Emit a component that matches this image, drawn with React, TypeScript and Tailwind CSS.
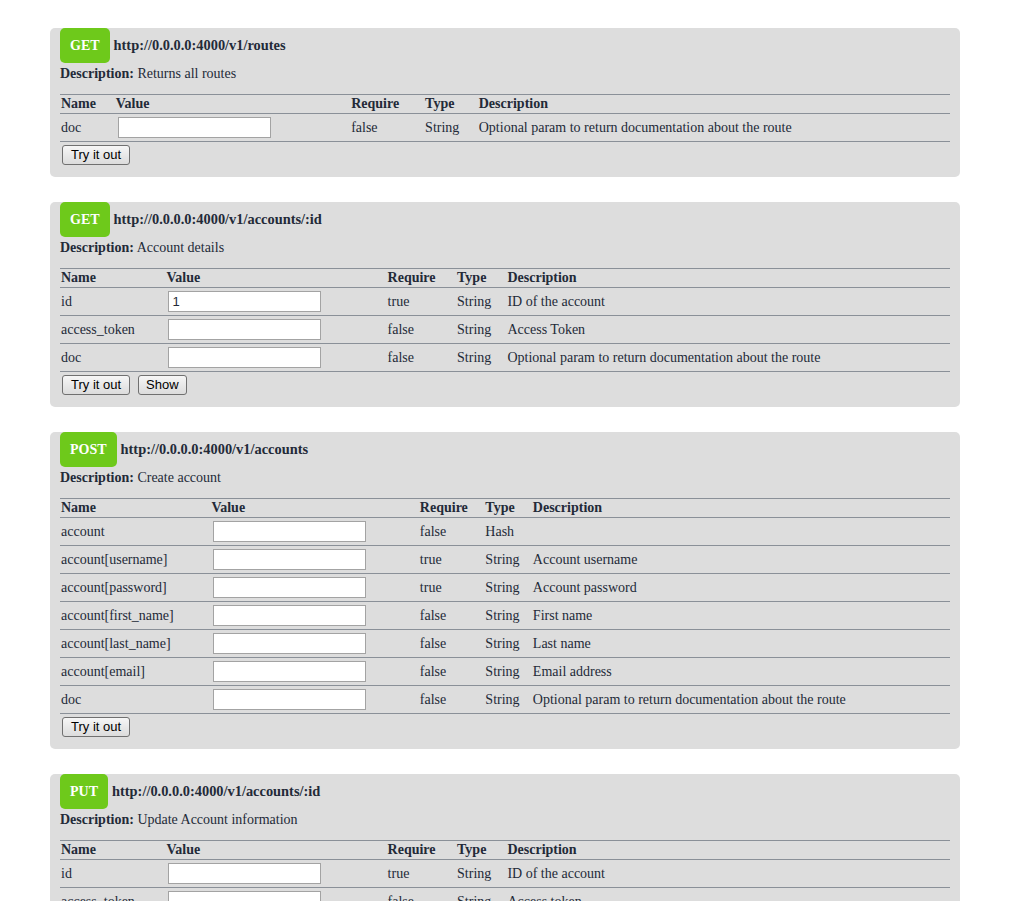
import React from 'react';

type Param = {
  name: string;
  value?: string;
  require: string;
  type: string;
  description: string;
};

type Route = {
  method: string;
  url: string;
  description: string;
  params: Param[];
  showButton?: boolean;
};

const docParam: Param = {
  name: 'doc',
  require: 'false',
  type: 'String',
  description: 'Optional param to return documentation about the route',
};

const routes: Route[] = [
  {
    method: 'GET',
    url: 'http://0.0.0.0:4000/v1/routes',
    description: 'Returns all routes',
    params: [docParam],
  },
  {
    method: 'GET',
    url: 'http://0.0.0.0:4000/v1/accounts/:id',
    description: 'Account details',
    showButton: true,
    params: [
      { name: 'id', value: '1', require: 'true', type: 'String', description: 'ID of the account' },
      { name: 'access_token', require: 'false', type: 'String', description: 'Access Token' },
      docParam,
    ],
  },
  {
    method: 'POST',
    url: 'http://0.0.0.0:4000/v1/accounts',
    description: 'Create account',
    params: [
      { name: 'account', require: 'false', type: 'Hash', description: '' },
      { name: 'account[username]', require: 'true', type: 'String', description: 'Account username' },
      { name: 'account[password]', require: 'true', type: 'String', description: 'Account password' },
      { name: 'account[first_name]', require: 'false', type: 'String', description: 'First name' },
      { name: 'account[last_name]', require: 'false', type: 'String', description: 'Last name' },
      { name: 'account[email]', require: 'false', type: 'String', description: 'Email address' },
      docParam,
    ],
  },
  {
    method: 'PUT',
    url: 'http://0.0.0.0:4000/v1/accounts/:id',
    description: 'Update Account information',
    params: [
      { name: 'id', require: 'true', type: 'String', description: 'ID of the account' },
      { name: 'access_token', require: 'false', type: 'String', description: 'Access token' },
      docParam,
    ],
  },
];

const btn =
  "h-[20px] rounded-[3px] border border-[#707070] bg-gradient-to-b from-[#f6f6f6] to-[#dcdcdc] text-[13px] leading-[16px] text-black font-['Liberation_Sans',Arial,sans-serif]";

const RouteCard = ({ route }: { route: Route }) => (
  <div className="bg-[#dddddd] rounded-[5px] px-[10px] mb-[25px]">
    <div className="flex items-center h-[35px]">
      <span className="h-[35px] flex items-center px-[10px] rounded-[5px] bg-[#6ec91b] text-white font-bold text-[14px]">
        {route.method}
      </span>
      <span className="ml-[4px] font-bold text-[14.4px]">{route.url}</span>
    </div>
    <div className="mt-[1px] leading-[20px] text-[14px]">
      <b>Description:</b> {route.description}
    </div>
    <table className="w-full mt-[10px] border-collapse border-b border-[#8a9098] text-[14px] leading-[16px]">
      <thead>
        <tr className="border-t border-[#8a9098] text-left">
          <th className="p-[1px] font-bold">Name</th>
          <th className="p-[1px] font-bold">Value</th>
          <th className="p-[1px] font-bold">Require</th>
          <th className="p-[1px] font-bold">Type</th>
          <th className="p-[1px] pr-[5px] font-bold">Description</th>
        </tr>
      </thead>
      <tbody>
        {route.params.map((p) => (
          <tr key={p.name} className="border-t border-[#8a9098]">
            <td className="p-[1px] whitespace-nowrap">{p.name}</td>
            <td className="p-[1px]">
              <input
                defaultValue={p.value}
                className="m-[2px] block w-[153px] h-[21px] bg-white border border-[#a3a3a3] px-[3px] text-[13px] font-['Liberation_Sans',Arial,sans-serif] outline-none"
              />
            </td>
            <td className="p-[1px]">{p.require}</td>
            <td className="p-[1px]">{p.type}</td>
            <td className="p-[1px] pr-[5px]">{p.description}</td>
          </tr>
        ))}
      </tbody>
    </table>
    <div className="flex gap-[8px] pt-[3px] pb-[12px] pl-[2px]">
      <button className={`${btn} px-[8px]`}>Try it out</button>
      {route.showButton && <button className={`${btn} px-[7px]`}>Show</button>}
    </div>
  </div>
);

export default function App() {
  return (
    <div className="bg-white min-h-screen pt-[28px] font-['Liberation_Serif','Times_New_Roman',serif] text-[#232a38]">
      <div className="ml-[50px] w-[910px]">
        {routes.map((r, i) => (
          <RouteCard key={i} route={r} />
        ))}
      </div>
    </div>
  );
}
